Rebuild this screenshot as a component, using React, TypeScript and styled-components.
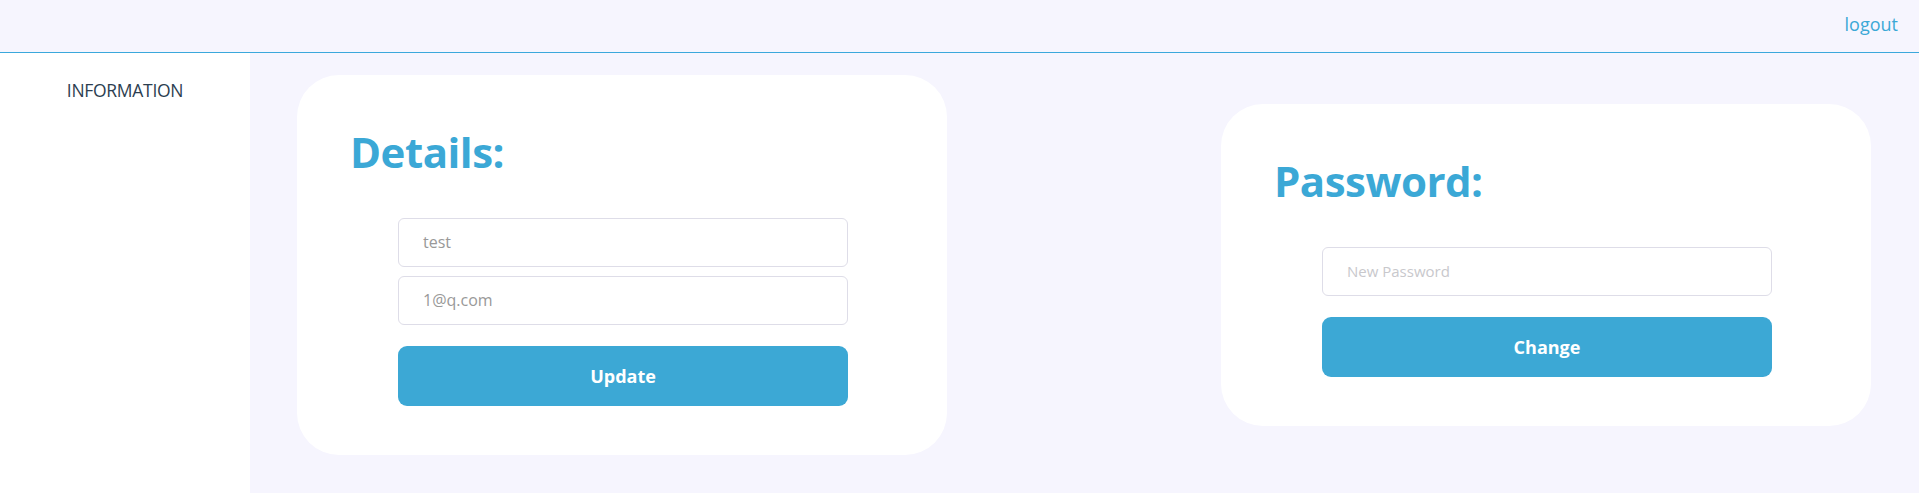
import styled, { createGlobalStyle } from 'styled-components';

const GlobalStyle = createGlobalStyle`
    * {
        box-sizing: border-box;
    }
    body {
        margin: 0;
        background-color: #f6f5fe;
        font-family: 'Open Sans', 'Noto Sans', sans-serif;
    }
`;

const Page = styled.div`
    display: flex;
    flex-direction: column;
    height: 493px;
    overflow: hidden;
`;

const Header = styled.header`
    display: flex;
    justify-content: flex-end;
    align-items: center;
    height: 53px;
    padding: 0 21px 4px 0;
    border-bottom: 1px solid #3ba8dc;
    background-color: #f6f5fe;
`;

const Logout = styled.a`
    font-size: 18px;
    color: #3ba8d6;
    text-decoration: none;
    cursor: pointer;
`;

const Body = styled.div`
    display: flex;
    flex: 1;
`;

const Sidebar = styled.nav`
    width: 250px;
    background-color: #ffffff;
    padding-top: 25px;
    text-align: center;
`;

const NavItem = styled.div`
    font-size: 17.5px;
    color: #2c3e50;
    letter-spacing: -0.3px;
`;

const Main = styled.main`
    flex: 1;
    display: flex;
    justify-content: space-between;
    align-items: center;
    padding: 0 48px 17px 47px;
`;

const Card = styled.section`
    width: 650px;
    background-color: #ffffff;
    border-radius: 42px;
    padding: 49px 100px 49px 53px;
`;

const Title = styled.h2`
    margin: 0 0 39px 0;
    font-size: 42px;
    line-height: 55px;
    font-weight: 700;
    color: #3ba8d6;
    letter-spacing: -0.5px;
`;

const Form = styled.form`
    display: flex;
    flex-direction: column;
    margin-left: 48px;
    width: 450px;
`;

const Input = styled.input<{ $last?: boolean }>`
    height: 49px;
    margin-bottom: ${props => (props.$last ? '21px' : '9px')};
    padding: 0 24px;
    border: 1px solid #dedde8;
    border-radius: 6px;
    font-family: inherit;
    font-size: 16px;
    color: #999999;
    outline: none;

    &::placeholder {
        color: #c8c8cc;
        font-size: 15px;
    }
`;

const Button = styled.button`
    height: 60px;
    border: none;
    border-radius: 9px;
    background-color: #3ca8d5;
    color: #ffffff;
    font-family: inherit;
    font-size: 18px;
    font-weight: 700;
    cursor: pointer;
`;

const App: React.FC = () => {
    return (
        <>
            <GlobalStyle />
            <Page>
                <Header>
                    <Logout>logout</Logout>
                </Header>
                <Body>
                    <Sidebar>
                        <NavItem>INFORMATION</NavItem>
                    </Sidebar>
                    <Main>
                        <Card>
                            <Title>Details:</Title>
                            <Form onSubmit={e => e.preventDefault()}>
                                <Input defaultValue="test" />
                                <Input defaultValue="1@q.com" $last />
                                <Button type="submit">Update</Button>
                            </Form>
                        </Card>
                        <Card>
                            <Title>Password:</Title>
                            <Form onSubmit={e => e.preventDefault()}>
                                <Input type="password" placeholder="New Password" $last />
                                <Button type="submit">Change</Button>
                            </Form>
                        </Card>
                    </Main>
                </Body>
            </Page>
        </>
    );
};

export default App;
